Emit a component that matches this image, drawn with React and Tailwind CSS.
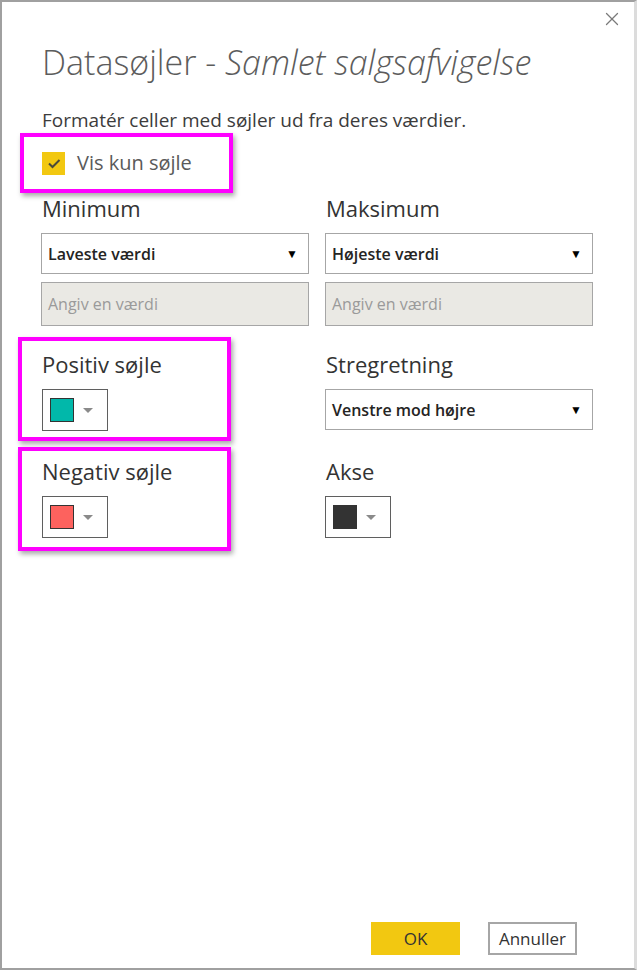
import { X } from "lucide-react";

const font = { fontFamily: '"Open Sans", "Noto Sans", sans-serif' };

function Dropdown({ label }) {
  return (
    <div className="flex h-[41px] w-[268px] items-center justify-between border border-[#a6a6a6] bg-white pl-[6px] pr-[10px]">
      <span className="text-[16px] font-semibold text-[#252423]">{label}</span>
      <span className="text-[12px] text-black">▼</span>
    </div>
  );
}

function ValueInput() {
  return (
    <div className="flex h-[44px] w-[268px] items-center border border-[#a6a6a6] bg-[#eae9e4] pl-[6px]">
      <span className="text-[16px] text-[#9a9a9a]">Angiv en værdi</span>
    </div>
  );
}

function ColorPicker({ color }) {
  return (
    <div className="flex h-[42px] w-[66px] items-center gap-[9px] border border-[#5f5f5f] bg-white pl-[7px]">
      <div className={`h-[24px] w-[24px] border border-[#333] ${color}`} />
      <div className="h-0 w-0 border-x-[5px] border-t-[5px] border-x-transparent border-t-[#8a8a8a]" />
    </div>
  );
}

function Highlight({ children, className }) {
  return (
    <div
      className={`border-[4px] border-[#ff00ff] shadow-[2px_3px_5px_rgba(0,0,0,0.35)] ${className}`}
    >
      {children}
    </div>
  );
}

export default function App() {
  return (
    <div style={font} className="h-[970px] w-[639px] bg-white">
      <div className="relative h-[970px] w-[637px] border-y-2 border-l-2 border-r-[3px] border-y-[#a0a0a0] border-l-[#a0a0a0] border-r-[#dcdcdc]">
        <X className="absolute right-[11px] top-[6px] h-[22px] w-[22px] text-[#7a7a7a]" strokeWidth={1.4} />

        <div className="pl-[39px] pt-[38px]">
          <h1 className="pl-[1px] text-[34px] font-light leading-[44px] text-[#5c5c5c]">
            Datasøjler - <span className="italic">Samlet salgsafvigelse</span>
          </h1>

          <p className="mt-[23px] pl-[1px] text-[19px] leading-[26px] text-[#3c3c3c]">
            Formatér celler med søjler ud fra deres værdier.
          </p>

          <Highlight className="-ml-[21px] flex h-[60px] w-[213px] items-center gap-[12px] pl-[18px]">
            <div className="flex h-[23px] w-[23px] items-center justify-center bg-[#f2c811]">
              <svg width="14" height="11" viewBox="0 0 14 11">
                <path d="M2 5.5 L5.5 9 L12.5 2" fill="none" stroke="#4a4a3a" strokeWidth="2" />
              </svg>
            </div>
            <span className="text-[20px] text-[#5a5a5a]">Vis kun søjle</span>
          </Highlight>

          <div className="grid w-[552px] grid-cols-2 gap-x-[16px]">
            <div>
              <div className="pl-[1px] text-[22px] leading-[30px] text-[#333]">Minimum</div>
              <div className="mt-[10px]">
                <Dropdown label="Laveste værdi" />
              </div>
              <div className="mt-[8px]">
                <ValueInput />
              </div>
            </div>
            <div>
              <div className="pl-[1px] text-[22px] leading-[30px] text-[#333]">Maksimum</div>
              <div className="mt-[10px]">
                <Dropdown label="Højeste værdi" />
              </div>
              <div className="mt-[8px]">
                <ValueInput />
              </div>
            </div>

            <div className="mt-[11px]">
              <Highlight className="-ml-[23px] h-[104px] w-[213px] pl-[20px] pt-[8px]">
                <div className="text-[22px] leading-[30px] text-[#333]">Positiv søjle</div>
                <div className="mt-[10px]">
                  <ColorPicker color="bg-[#01b8aa]" />
                </div>
              </Highlight>
            </div>
            <div className="mt-[11px] pt-[12px]">
              <div className="pl-[1px] text-[22px] leading-[30px] text-[#333]">Stregretning</div>
              <div className="mt-[10px]">
                <Dropdown label="Venstre mod højre" />
              </div>
            </div>

            <div className="mt-[6px]">
              <Highlight className="-ml-[23px] h-[104px] w-[213px] pl-[20px] pt-[5px]">
                <div className="text-[22px] leading-[30px] text-[#333]">Negativ søjle</div>
                <div className="mt-[10px]">
                  <ColorPicker color="bg-[#fd625e]" />
                </div>
              </Highlight>
            </div>
            <div className="mt-[6px] pt-[9px]">
              <div className="pl-[1px] text-[22px] leading-[30px] text-[#333]">Akse</div>
              <div className="mt-[10px]">
                <ColorPicker color="bg-[#333333]" />
              </div>
            </div>
          </div>
        </div>

        <div className="absolute bottom-[13px] right-[57px] flex gap-[28px]">
          <button className="h-[33px] w-[89px] bg-[#f2c811] text-[17px] text-[#333]">OK</button>
          <button className="h-[33px] w-[89px] border-2 border-[#a6a6a6] bg-white text-[17px] text-[#333]">
            Annuller
          </button>
        </div>
      </div>
    </div>
  );
}
